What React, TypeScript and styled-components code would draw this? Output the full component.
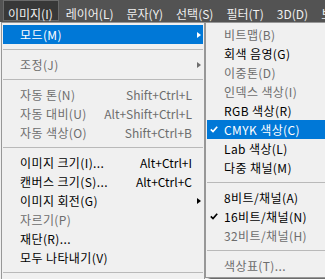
import styled, { createGlobalStyle } from "styled-components";

const GlobalStyle = createGlobalStyle`
  html, body {
    margin: 0;
    padding: 0;
  }
  body {
    background: #f0f0f0;
    font-family: "Noto Sans CJK KR", "Noto Sans", sans-serif;
    font-size: 12px;
  }
`;

const Screen = styled.div`
  width: 325px;
  height: 279px;
  overflow: hidden;
  background: #f0f0f0;
`;

const MenuBar = styled.div`
  display: flex;
  gap: 2px;
  height: 22px;
  padding-left: 3px;
  background: #535353;
  white-space: nowrap;
`;

const BarItem = styled.div<{ $open?: boolean }>`
  box-sizing: border-box;
  height: 21px;
  padding: 4px 5px 0 4px;
  line-height: 17px;
  color: #f0f0f0;
  background: ${(p) => (p.$open ? "#383838" : "transparent")};
  border: 1px solid ${(p) => (p.$open ? "#6a6a6a" : "transparent")};
`;

const Dropdowns = styled.div`
  display: flex;
  align-items: flex-start;
  padding-left: 1px;
`;

const Menu = styled.div<{ $width: number; $shadow?: boolean }>`
  box-sizing: border-box;
  width: ${(p) => p.$width}px;
  flex-shrink: 0;
  padding: 2px 1px;
  background: #f0f0f0;
  border: 1px solid #979797;
  box-shadow: ${(p) => (p.$shadow ? "4px 4px 2px rgba(0, 0, 0, 0.55)" : "none")};
`;

const Row = styled.div<{ $active?: boolean; $disabled?: boolean }>`
  display: grid;
  grid-template-columns: 17px 1fr auto 11px;
  align-items: center;
  height: 19px;
  line-height: 19px;
  white-space: nowrap;
  background: ${(p) => (p.$active ? "#0078d7" : "transparent")};
  color: ${(p) => (p.$active ? "#ffffff" : p.$disabled ? "#6d6d6d" : "#000000")};
`;

const Gutter = styled.span`
  display: flex;
  align-items: center;
  padding-left: 3px;
`;

const Label = styled.span`
  letter-spacing: 0.4px;
`;

const Shortcut = styled.span`
  padding-left: 12px;
`;

const Arrow = styled.span`
  display: block;
  width: 0;
  height: 0;
  margin-left: 5px;
  border-top: 3.5px solid transparent;
  border-bottom: 3.5px solid transparent;
  border-left: 4px solid currentColor;
`;

const Separator = styled.div`
  height: 11px;
  display: flex;
  align-items: center;

  &::after {
    content: "";
    flex: 1;
    height: 1px;
    background: #b9b9b9;
  }
`;

type Item =
  | "sep"
  | {
      label: string;
      shortcut?: string;
      sub?: boolean;
      disabled?: boolean;
      active?: boolean;
      checked?: boolean;
    };

const mainItems: Item[] = [
  { label: "모드(M)", sub: true, active: true },
  "sep",
  { label: "조정(J)", sub: true, disabled: true },
  "sep",
  { label: "자동 톤(N)", shortcut: "Shift+Ctrl+L", disabled: true },
  { label: "자동 대비(U)", shortcut: "Alt+Shift+Ctrl+L", disabled: true },
  { label: "자동 색상(O)", shortcut: "Shift+Ctrl+B", disabled: true },
  "sep",
  { label: "이미지 크기(I)...", shortcut: "Alt+Ctrl+I" },
  { label: "캔버스 크기(S)...", shortcut: "Alt+Ctrl+C" },
  { label: "이미지 회전(G)", sub: true },
  { label: "자르기(P)", disabled: true },
  { label: "재단(R)..." },
  { label: "모두 나타내기(V)" },
  "sep",
];

const modeItems: Item[] = [
  { label: "비트맵(B)", disabled: true },
  { label: "회색 음영(G)" },
  { label: "이중톤(D)", disabled: true },
  { label: "인덱스 색상(I)", disabled: true },
  { label: "RGB 색상(R)" },
  { label: "CMYK 색상(C)", active: true, checked: true },
  { label: "Lab 색상(L)" },
  { label: "다중 채널(M)" },
  "sep",
  { label: "8비트/채널(A)" },
  { label: "16비트/채널(N)", checked: true },
  { label: "32비트/채널(H)", disabled: true },
  "sep",
  { label: "색상표(T)...", disabled: true },
];

const barItems = ["이미지(I)", "레이어(L)", "문자(Y)", "선택(S)", "필터(T)", "3D(D)", "보기(V)"];

const Check = () => (
  <svg width="8" height="7" viewBox="0 0 8 7">
    <path d="M0.8 3.4 L3 5.6 L7.2 0.8" fill="none" stroke="currentColor" strokeWidth="1.7" />
  </svg>
);

const MenuList = ({ items }: { items: Item[] }) => (
  <>
    {items.map((item, i) =>
      item === "sep" ? (
        <Separator key={i} />
      ) : (
        <Row key={i} $active={item.active} $disabled={item.disabled}>
          <Gutter>{item.checked && <Check />}</Gutter>
          <Label>{item.label}</Label>
          <Shortcut>{item.shortcut}</Shortcut>
          <span>{item.sub && <Arrow />}</span>
        </Row>
      )
    )}
  </>
);

export default function App() {
  return (
    <Screen>
      <GlobalStyle />
      <MenuBar>
        {barItems.map((label, i) => (
          <BarItem key={label} $open={i === 0}>
            {label}
          </BarItem>
        ))}
      </MenuBar>
      <Dropdowns>
        <Menu $width={204}>
          <MenuList items={mainItems} />
        </Menu>
        <Menu $width={140} $shadow>
          <MenuList items={modeItems} />
        </Menu>
      </Dropdowns>
    </Screen>
  );
}
